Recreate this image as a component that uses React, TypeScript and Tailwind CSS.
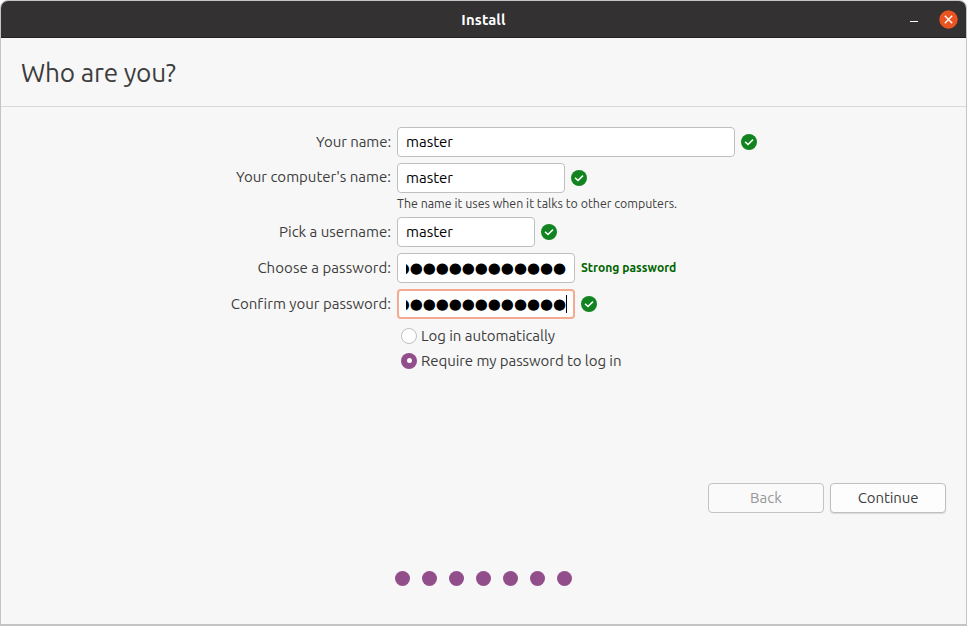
import React from 'react';

function Check() {
  return (
    <svg className="ml-1.5 size-4 shrink-0" viewBox="0 0 16 16">
      <circle cx="8" cy="8" r="8" fill="#12841f" />
      <path d="M4 7.7 7 10.5 12 5.6" fill="none" stroke="#fff" strokeWidth="1.5" />
    </svg>
  );
}

function Row({ label, labelClass, children }: { label: string; labelClass: string; children: React.ReactNode }) {
  return (
    <div className="flex h-[30px] items-center">
      <div className="flex w-[390px] shrink-0 justify-end whitespace-nowrap leading-5">
        <span className={labelClass}>{label}</span>
      </div>
      <div className="ml-1.5 flex items-center">{children}</div>
    </div>
  );
}

const field = 'flex h-[30px] items-center rounded-[4px] border border-[#c0bfbf] bg-white px-2 text-black leading-5 ';

function Dots() {
  return (
    <div className="flex h-5 flex-1 justify-end overflow-hidden font-['DejaVu_Sans',sans-serif] text-[15px] leading-[21px] tracking-[-0.06px]">
      <span className="whitespace-nowrap">●●●●●●●●●●●●●</span>
    </div>
  );
}

export default function App() {
  return (
    <div className="h-[626px] w-[967px] bg-white font-['Ubuntu','Noto_Sans',sans-serif] text-[15px] text-[#3d3d3d] [font-variant-ligatures:none]">
      <div className="flex h-[626px] flex-col overflow-hidden rounded-t-[8px] border border-b-2 border-[#c4c4c4] bg-[#f7f7f7]">
        <header className="flex h-[37px] shrink-0 items-center border-b border-[#222021] bg-[#333132] text-white">
          <div className="w-[100px]" />
          <div className="flex-1 pt-0.5 text-center text-[14.8px] font-bold leading-5 tracking-[0.15px]">Install</div>
          <div className="flex w-[100px] items-center justify-end pr-[8.5px]">
            <span className="mr-[20.5px] mt-1 h-px w-2 bg-white" />
            <svg className="size-[19px]" viewBox="0 0 19 19">
              <circle cx="9.5" cy="9.5" r="9.2" fill="#e95420" />
              <path d="m5.8 5.8 7.4 7.4m0-7.4-7.4 7.4" stroke="#fff" strokeWidth="1.4" />
            </svg>
          </div>
        </header>
        <div className="flex h-[69px] shrink-0 items-center border-b border-[#dadada] pl-5 pt-0.5 text-[26.2px]">
          <h1 className="tracking-[-0.2px]">Who are you?</h1>
        </div>
        <main className="flex flex-col pt-5">
          <Row label="Your name:" labelClass="tracking-[-0.08px]">
            <div className={field + 'w-[338px]'}>master</div>
            <Check />
          </Row>
          <div className="h-1.5" />
          <Row label="Your computer's name:" labelClass="pb-0.5">
            <div className={field + 'w-[168px]'}>master</div>
            <Check />
          </Row>
          <div className="flex h-6 items-center pb-1 pl-[396px] text-[12.4px] leading-5">
            <span className="whitespace-nowrap">The name it uses when it talks to other computers.</span>
          </div>
          <Row label="Pick a username:" labelClass="">
            <div className={field + 'w-[138px]'}>master</div>
            <Check />
          </Row>
          <div className="h-1.5" />
          <Row label="Choose a password:" labelClass="tracking-[0.05px]">
            <div className={field + 'w-[178px]'}><Dots /></div>
            <span className="ml-1.5 whitespace-nowrap text-[12.1px] font-bold text-[#006400]">Strong password</span>
          </Row>
          <div className="h-1.5" />
          <Row label="Confirm your password:" labelClass="">
            <div className="flex h-[30px] w-[178px] items-center rounded-[4px] border-2 border-[#f4aa90] bg-white pl-[7px] pr-1.5 text-black">
              <Dots />
              <span className="h-[18px] w-px bg-black" />
            </div>
            <Check />
          </Row>
          <div className="mt-1 flex h-[25px] items-center pl-[400px]">
            <span className="size-4 rounded-full border border-[#c0bfbf] bg-white" />
            <span className="ml-1 whitespace-nowrap pt-px leading-5 tracking-[-0.05px]">Log in automatically</span>
          </div>
          <div className="flex h-[25px] items-center pl-[400px]">
            <span className="flex size-4 items-center justify-center rounded-full bg-[#924d8b]">
              <span className="size-[5px] rounded-full bg-white" />
            </span>
            <span className="ml-1 whitespace-nowrap pt-px leading-5 tracking-[-0.07px]">Require my password to log in</span>
          </div>
        </main>
        <div className="mt-[110px] flex justify-end gap-1.5 pr-5">
          <button className="flex h-[30px] w-[116px] items-center justify-center rounded-[4px] border border-[#c3c3c3] bg-[#fafafa] text-[#989898]">Back</button>
          <button className="flex h-[30px] w-[116px] items-center justify-center rounded-[4px] border border-[#c0bfbf] bg-[#fdfdfd] tracking-[-0.1px] shadow-[0_1px_1px_rgba(0,0,0,0.12)]">Continue</button>
        </div>
        <div className="mt-[58px] flex justify-center gap-3">
          {[0, 1, 2, 3, 4, 5, 6].map((i) => (
            <span key={i} className="size-[15px] rounded-full bg-[#924d8b]" />
          ))}
        </div>
      </div>
    </div>
  );
}
